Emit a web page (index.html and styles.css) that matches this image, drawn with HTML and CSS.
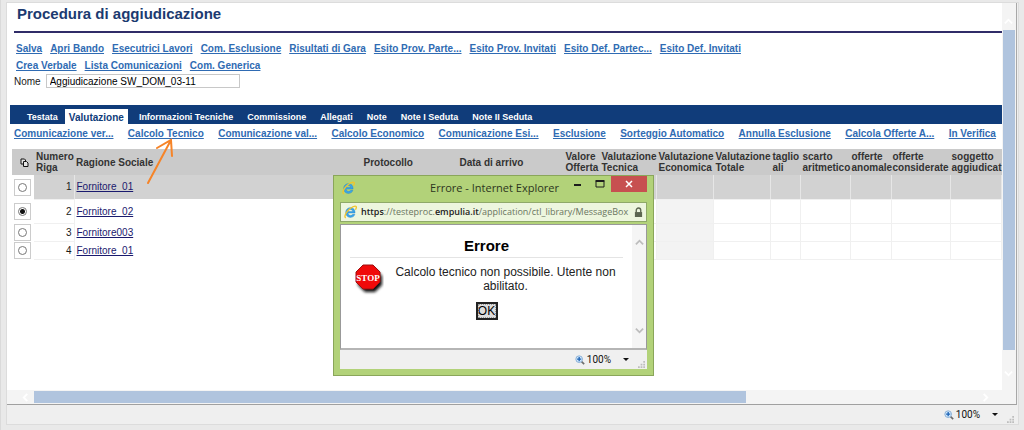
FILE: index.html
```html
<!DOCTYPE html>
<html lang="it">
<head>
<meta charset="utf-8">
<title>Procedura di aggiudicazione</title>
<link rel="stylesheet" href="styles.css">
</head>
<body>
<svg class="defs" aria-hidden="true">
  <symbol id="ie" viewBox="1 0 14 16">
    <path d="M13.2 9.2H5.2c.1 1.700 1.300 2.700 2.900 2.700 1.200 0 2-.5 2.400-1.200h2.500C12.300 13 10.400 14.200 8 14.200c-3.300 0-5.500-2.300-5.500-5.600S4.800 3 8 3c3.400 0 5.500 2.500 5.200 6.200zM5.300 7.400h5.200C10.300 6 9.400 5.200 7.900 5.200S5.500 6 5.300 7.400z" fill="#3aa5e8" stroke="#1878c4" stroke-width=".4"/>
    <path d="M2.600 14.600C.6 13.800 2 9.600 5.500 6 9 2.400 13.200.4 14.400 1.700c.7.800.2 2.200-.7 3.700" fill="none" stroke="#f1c52a" stroke-width="1.500"/>
  </symbol>
  <symbol id="magnifier" viewBox="0 0 12 12">
    <path d="M7.600 7.600l3.400 3.400" stroke="#6d6d6d" stroke-width="2"/>
    <circle cx="5" cy="5" r="4" fill="#d3e9fb" stroke="#7ba3cf"/>
    <path d="M5 2.500v5M2.500 5h5" stroke="#1c62b5" stroke-width="1.600"/>
  </symbol>
  <symbol id="grip" viewBox="0 0 8 8">
    <path d="M6 0h2v2H6zM3 3h2v2H3zM6 3h2v2H6zM0 6h2v2H0zM3 6h2v2H3zM6 6h2v2H6z" fill="#bdbdbd"/>
  </symbol>
  <symbol id="chevron" viewBox="0 0 10 10">
    <path d="M1 7l4-4 4 4" fill="none" stroke="currentColor" stroke-width="2"/>
  </symbol>
</svg>

<div class="window">
  <div class="viewport">
    <main class="page">
      <h1 class="title">Procedura di aggiudicazione</h1>
      <nav class="commands">
        <a href="#">Salva</a>
        <a href="#">Apri Bando</a>
        <a href="#">Esecutrici Lavori</a>
        <a href="#">Com. Esclusione</a>
        <a href="#">Risultati di Gara</a>
        <a href="#">Esito Prov. Parte...</a>
        <a href="#">Esito Prov. Invitati</a>
        <a href="#">Esito Def. Partec...</a>
        <a href="#">Esito Def. Invitati</a>
        <a href="#">Crea Verbale</a>
        <a href="#">Lista Comunicazioni</a>
        <a href="#">Com. Generica</a>
      </nav>
      <div class="field">
        <label for="nome">Nome</label>
        <input id="nome" type="text" value="Aggiudicazione SW_DOM_03-11">
      </div>
      <nav class="tabs">
        <a href="#">Testata</a>
        <a href="#" class="active">Valutazione</a>
        <a href="#">Informazioni Tecniche</a>
        <a href="#">Commissione</a>
        <a href="#">Allegati</a>
        <a href="#">Note</a>
        <a href="#">Note I Seduta</a>
        <a href="#">Note II Seduta</a>
      </nav>
      <nav class="actions">
        <a href="#">Comunicazione ver...</a>
        <a href="#">Calcolo Tecnico</a>
        <a href="#">Comunicazione val...</a>
        <a href="#">Calcolo Economico</a>
        <a href="#">Comunicazione Esi...</a>
        <a href="#">Esclusione</a>
        <a href="#">Sorteggio Automatico</a>
        <a href="#">Annulla Esclusione</a>
        <a href="#">Calcola Offerte A...</a>
        <a href="#">In Verifica</a>
      </nav>
      <table class="grid">
        <colgroup>
          <col class="c-pick"><col class="c-num"><col><col class="c-prot"><col class="c-date"><col class="c-val">
          <col class="c-score"><col class="c-score"><col class="c-score"><col class="c-cut"><col class="c-diff"><col class="c-odd"><col class="c-cons"><col class="c-subj">
        </colgroup>
        <thead>
          <tr>
            <th class="pick"><svg class="copy" viewBox="0 0 9 9" aria-hidden="true"><path d="M1 1h3.500l1 1v4H1z" fill="#e4e4e4" stroke="#111"/><path d="M3.500 3.500h3l1.500 1.500v3.500H3.500z" fill="#e4e4e4" stroke="#111"/></svg></th>
            <th>Numero<br>Riga</th><th>Ragione Sociale</th><th>Protocollo</th><th>Data di arrivo</th><th>Valore<br>Offerta</th>
            <th>Valutazione<br>Tecnica</th><th>Valutazione<br>Economica</th><th>Valutazione<br>Totale</th><th>taglio<br>ali</th><th>scarto<br>aritmetico</th><th class="tight">offerte<br>anomale</th><th class="tight">offerte<br>considerate</th><th class="tight">soggetto<br>aggiudicat</th>
          </tr>
        </thead>
        <tbody>
          <tr class="tall shaded"><td class="pick"><label class="box"><input type="radio" name="riga" aria-label="Riga 1"></label></td><td class="num">1</td><td><a href="#">Fornitore_01</a></td><td></td><td></td><td></td><td></td><td class="eco"></td><td></td><td></td><td></td><td></td><td></td><td></td></tr>
          <tr class="tall"><td class="pick"><label class="box"><input type="radio" name="riga" aria-label="Riga 2" checked></label></td><td class="num">2</td><td><a href="#">Fornitore_02</a></td><td></td><td></td><td></td><td></td><td class="eco"></td><td></td><td></td><td></td><td></td><td></td><td></td></tr>
          <tr><td class="pick"><label class="box"><input type="radio" name="riga" aria-label="Riga 3"></label></td><td class="num">3</td><td><a href="#">Fornitore003</a></td><td></td><td></td><td></td><td></td><td class="eco"></td><td></td><td></td><td></td><td></td><td></td><td></td></tr>
          <tr><td class="pick"><label class="box"><input type="radio" name="riga" aria-label="Riga 4"></label></td><td class="num">4</td><td><a href="#">Fornitore_01</a></td><td></td><td></td><td></td><td></td><td class="eco"></td><td></td><td></td><td></td><td></td><td></td><td></td></tr>
        </tbody>
      </table>
    </main>
    <div class="vbar"><svg class="chev"><use href="#chevron"/></svg><span class="vthumb"></span><svg class="chev down"><use href="#chevron"/></svg></div>
    <div class="hbar"><svg class="chev left"><use href="#chevron"/></svg><span class="hthumb"></span><svg class="chev right"><use href="#chevron"/></svg></div>
  </div>
  <footer class="status">
    <svg class="lens"><use href="#magnifier"/></svg><span class="zoom">100%</span><span class="caret"></span><svg class="grip"><use href="#grip"/></svg>
  </footer>
</div>

<svg class="arrow" viewBox="0 0 30 50" aria-hidden="true"><path d="M3 47L26 4M12 12L26 4L27 20" fill="none" stroke="#f68428" stroke-width="2" stroke-linecap="round"/></svg>

<section class="dialog" role="dialog" aria-label="Errore">
  <header class="caption">
    <svg class="ie"><use href="#ie"/></svg>
    <span class="caption-text">Errore - Internet Explorer</span>
    <button class="sys" aria-label="Riduci"><svg viewBox="0 0 10 10"><path d="M1 6h7" stroke="#1c1c1c" stroke-width="2"/></svg></button>
    <button class="sys" aria-label="Ingrandisci"><svg viewBox="0 0 10 10"><path d="M1 2.500h8v5.500H1z" fill="none" stroke="#1c1c1c"/><path d="M.5 2h9" stroke="#1c1c1c" stroke-width="2"/></svg></button>
    <button class="sys close" aria-label="Chiudi"><svg viewBox="0 0 10 10"><path d="M2 2l6 6M8 2L2 8" stroke="#fff" stroke-width="1.500"/></svg></button>
  </header>
  <div class="address">
    <svg class="ie"><use href="#ie"/></svg>
    <span class="url"><b>https</b>://testeproc.<b>empulia.it</b>/application/ctl_library/MessageBox</span>
    <svg class="lock" viewBox="0 0 10 12"><path d="M2.500 6V3.500a2.500 2.500 0 0 1 5 0V6" fill="none" stroke="#5c6650" stroke-width="1.500"/><path d="M1 5.500h8V11H1z" fill="#5c6650"/></svg>
  </div>
  <div class="client">
    <div class="message">
      <h2>Errore</h2>
      <div class="body">
        <svg class="stop" viewBox="0 0 30 32" role="img" aria-label="Stop">
          <defs><filter id="soft" x="-30%" y="-30%" width="160%" height="160%"><feGaussianBlur stdDeviation="1.500"/></filter></defs>
          <path d="M11 6h10l7 7v9l-7 7H11l-7-7V13z" fill="#111" filter="url(#soft)"/>
          <path d="M9 2h10l7 7v10l-7 7H9l-7-7V9z" fill="#f00a0a" stroke="#9c1010"/>
          <text x="14" y="18" text-anchor="middle" class="stop-text">STOP</text>
        </svg>
        <p>Calcolo tecnico non possibile. Utente non abilitato.</p>
      </div>
      <button class="ok">OK</button>
    </div>
    <div class="rail"><svg class="chev"><use href="#chevron"/></svg><svg class="chev down"><use href="#chevron"/></svg></div>
  </div>
  <footer class="dialog-status">
    <svg class="lens"><use href="#magnifier"/></svg><span class="zoom">100%</span><span class="caret"></span><svg class="grip"><use href="#grip"/></svg>
  </footer>
</section>
</body>
</html>
```
FILE: styles.css
```css
* { box-sizing: border-box; }
html { height: 100%; }
body {
  height: 100%;
  margin: 0;
  padding: 2px 4px 5px 1px;
  overflow: hidden;
  background: #e9e9e9;
  border-left: 1px solid #dadada;
  font: 10px/11px "Liberation Sans", Arial, sans-serif;
  color: #1a1a1a;
}
svg { display: block; flex: none; }
button { font: inherit; }
.defs { position: absolute; width: 0; height: 0; }

.window {
  display: flex;
  flex-direction: column;
  height: 100%;
  margin: 0 1px 0 4px;
  background: #efefef;
  border: 1px solid #dcdcdc;
}
.viewport {
  flex: 1;
  min-height: 0;
  display: grid;
  grid-template: minmax(0, 1fr) 14px / minmax(0, 1fr) 14px;
  margin-right: 1px;
  background: #f4f4f4;
  border-right: 1px solid #a8a8a8;
  border-bottom: 1px solid #a0a0a0;
}
.page { overflow: hidden; background: #fff; }
.title {
  margin: 0 0 0 7px;
  padding: 2px 3px 9px;
  border-bottom: 2px solid #302c68;
  font-size: 15px;
  line-height: 17px;
  color: #1c3a70;
}
.commands {
  display: flex;
  flex-wrap: wrap;
  gap: 0 8px;
  max-width: 760px;
  padding: 7px 0 0 9px;
  line-height: 17px;
}
.commands a, .actions a { font-weight: bold; color: #2f6bb3; white-space: nowrap; }
.field { display: flex; align-items: center; gap: 5px; padding-left: 7px; }
.field input {
  width: 194px;
  height: 14px;
  padding: 0 3px;
  border: 1px solid #c8c8c8;
  font: inherit;
}
.tabs {
  display: flex;
  align-items: flex-end;
  margin: 17px 0 0 3px;
  padding: 4px 0 0 10px;
  background: #103c7a;
  font-size: 9px;
  font-weight: bold;
  line-height: 13px;
}
.tabs a { padding: 2px 7px 0; color: #fff; text-decoration: none; }
.tabs .active { margin-right: 4px; padding: 2px 4px 0; background: #fff; color: #103c7a; font-size: 10px; }
.actions {
  display: flex;
  justify-content: space-between;
  padding: 3px 6px 8px 7px;
  line-height: 14px;
}

.grid { width: calc(100% - 5px); margin-left: 5px; table-layout: fixed; border-collapse: collapse; }
.c-pick { width: 22px; }
.c-num { width: 40px; }
.c-prot { width: 96px; }
.c-date { width: 106px; }
.c-val { width: 36px; }
.c-score { width: 57px; }
.c-cut { width: 30px; }
.c-diff { width: 50px; }
.c-odd { width: 41px; }
.c-cons { width: 59px; }
.c-subj { width: 51px; }
.grid th {
  height: 26px;
  padding: 0 0 0 2px;
  background: #cacaca;
  text-align: left;
  white-space: nowrap;
  color: #333;
}
.grid th.tight { padding-left: 1px; }
.grid td { height: 18px; padding: 0 2px; border: 1px solid #f0f0f0; border-width: 0 1px 1px 0; }
.grid td:nth-child(n+3):nth-child(-n+6) { border-color: transparent; }
.grid .tall td { height: 24px; }
.grid .shaded td { background: #d2d2d2; border-right-color: #e6e6e6; }
.grid .shaded td:nth-child(n+3):nth-child(-n+6) { border-right-color: #d2d2d2; }
.grid .eco { background: #f3f3f3; }
.grid .num { text-align: right; }
.grid td a { color: #1a1a6e; }
.grid td.pick, .grid .shaded td.pick { padding: 0 2px; background: #fff; border: 0; }
.copy { width: 9px; height: 9px; margin: 0 auto; }
.box { display: flex; align-items: center; justify-content: center; width: 17px; height: 17px; border: 1px solid #ccc; }
.box input {
  appearance: none;
  width: 9px;
  height: 9px;
  margin: 0;
  border: 1px solid #777;
  border-radius: 50%;
  background: #fff;
}
.box input:checked { background: radial-gradient(circle, #111 0 2px, #fff 3px); }

.chev { width: 9px; height: 9px; color: #fff; }
.down { transform: rotate(180deg); }
.left { transform: rotate(-90deg); }
.right { transform: rotate(90deg); }
.vbar { display: flex; flex-direction: column; align-items: center; padding: 14px 1px 12px 0; }
.vbar .chev { margin-bottom: 4px; }
.vbar .down { margin: 19px 0 0; }
.vthumb { flex: 1; width: 12px; background: #b0c4de; }
.hbar { display: flex; align-items: center; padding: 0 12px 0 14px; }
.hbar .left { margin-right: 4px; }
.hthumb { width: 73.5%; height: 12px; background: #b0c4de; }
.hbar .right { margin-left: auto; }
.status, .dialog-status {
  display: flex;
  align-items: center;
  justify-content: flex-end;
  height: 19px;
  padding-right: 4px;
}
.lens { width: 10px; height: 10px; margin-right: 2px; }
.zoom { font: 10px/14px Roboto, "Noto Sans", sans-serif; color: #111; }
.caret { width: 6px; margin: 0 9px 0 12px; border: 3px solid transparent; border-top-color: #111; border-bottom: 0; }
.grip { width: 7px; height: 7px; align-self: flex-end; margin-bottom: 1px; }

.arrow { position: absolute; left: 145px; top: 136px; width: 30px; height: 50px; }

.dialog {
  position: absolute;
  left: 333px;
  top: 175px;
  width: 321px;
  padding: 0 6px 6px;
  background: #b2d279;
  border: 1px solid #8aa65a;
}
.caption { display: flex; align-items: flex-start; height: 24px; padding-left: 2px; }
.ie { width: 13px; height: 14px; }
.caption .ie { margin-top: 5px; }
.caption-text {
  flex: 1;
  padding-top: 4px;
  text-align: right;
  font: 11px/16px "Open Sans", "Noto Sans", sans-serif;
  color: #2c3520;
}
.sys { width: 22px; height: 16px; padding: 3px 6px; border: 0; background: transparent; }
.sys svg { width: 10px; height: 10px; }
.caption-text + .sys { margin-left: 8px; }
.close { width: 36px; padding: 3px 13px; background: #c75050; }
.address {
  display: flex;
  align-items: center;
  height: 20px;
  margin: 2px 0 2px;
  padding: 0 3px;
  background: #edf6de;
  border: 1px solid #8fa969;
}
.url {
  flex: 1;
  min-width: 0;
  padding-left: 4px;
  white-space: nowrap;
  font: 9px/14px "Open Sans", "Noto Sans", sans-serif;
  color: #6a755f;
}
.url b { font-weight: 600; color: #222; }
.lock { width: 9px; height: 11px; margin-left: 2px; }
.client { display: flex; background: #fff; border: 1px solid #999; border-bottom: 2px solid #b5b5b5; }
.message { flex: 1; padding: 11px 9px 28px; text-align: center; font-size: 12px; line-height: 14px; color: #222; }
.message h2 { margin: 0; padding-bottom: 2px; border-bottom: 1px solid #e4e4e4; font-size: 15px; line-height: 19px; color: #000; }
.body { display: flex; align-items: flex-start; padding: 5px 0 0 4px; }
.body p { flex: 1; margin: 2px 0 0; padding: 0 4px 0 8px; }
.stop { width: 30px; height: 32px; }
.stop-text { font: bold 9px "Liberation Serif", "Times New Roman", serif; fill: #fff; }
.ok { width: 22px; height: 18px; margin-top: 7px; padding: 0; border: 2px solid #222; background: #ddd; outline: 1px dotted #999; outline-offset: -3px; line-height: 12px; }
.rail { display: flex; flex-direction: column; align-items: center; justify-content: space-between; width: 14px; padding: 13px 0; background: #f5f5f5; }
.rail .chev { color: #bdbdbd; }
.dialog-status { background: #f0f0f0; padding-right: 2px; }
```
